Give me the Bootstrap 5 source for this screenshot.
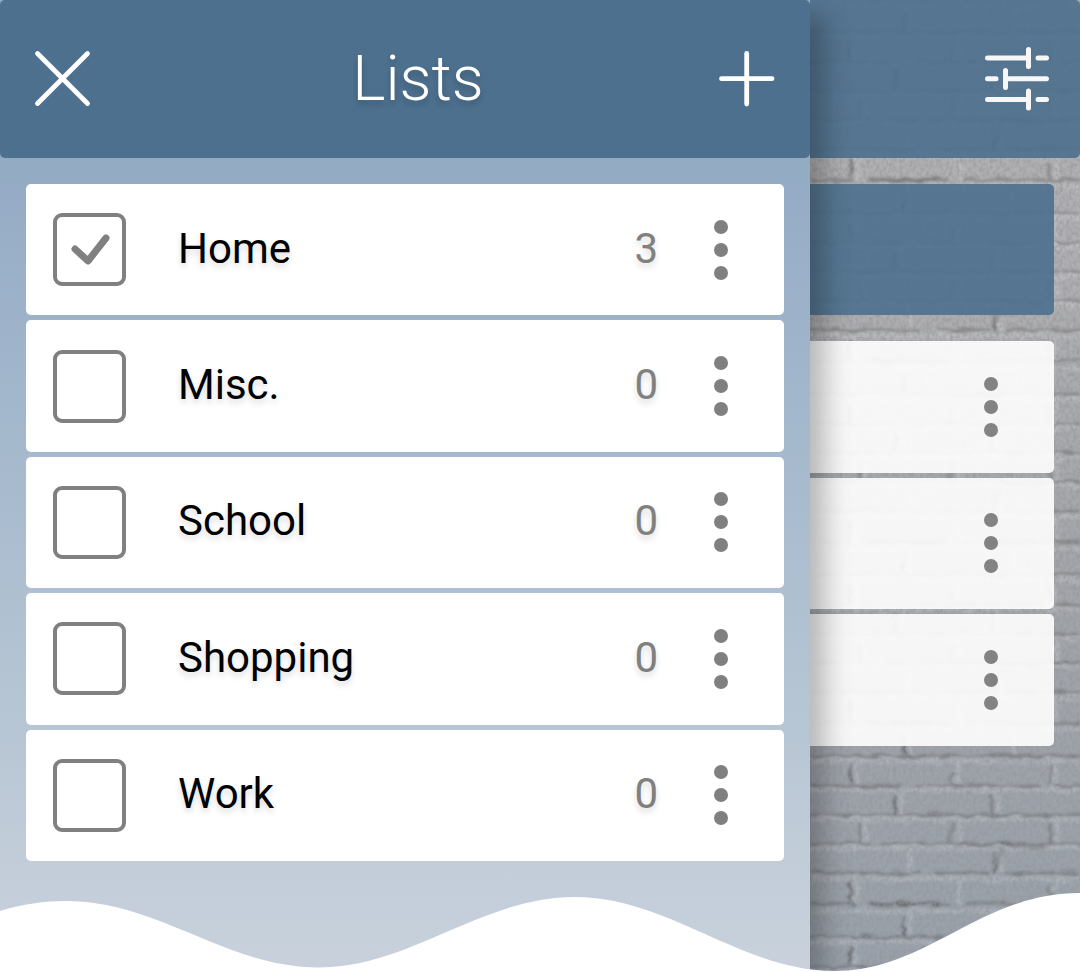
<!DOCTYPE html>
<html lang="en">
<head>
<meta charset="utf-8">
<meta name="viewport" content="width=device-width, initial-scale=1">
<title>Lists</title>
<link href="https://cdn.jsdelivr.net/npm/bootstrap@5.3.0/dist/css/bootstrap.min.css" rel="stylesheet">
<style>
  body { font-family: Roboto, "Liberation Sans", sans-serif; background: #fff; }
  .app-bar { height: 158px; background: #4d708e; border-radius: 5px; }
  .icon-btn { width: 126px; border: 0; background: none; padding: 0; color: #fff; }
  .bar-title { padding-left: 26px; font-size: 63px; font-weight: 300; line-height: 72px; color: #fff; text-shadow: 0 4px 6px rgba(0,0,0,.2); }

  .drawer { z-index: 2; background: linear-gradient(#92abc2 158px, #96acc6 190px, #a0b5cb 360px, #b7c6d4 730px, #c4cdda 880px, #c6d0db 940px, #cad0dc 972px); box-shadow: 15px 16px 24px rgba(0,0,0,.26); }
  .entries { display: grid; grid-auto-rows: 1fr; gap: 5px; }
  .drawer .entries { margin: 26px; min-height: 677px; }
  .entry { background: #fff; border-radius: 5px; }
  .entry .icon-btn { color: #808080; }
  .entry-name, .entry-count { padding-bottom: 2px; font-size: 42px; line-height: 48px; text-shadow: 0 4px 6px rgba(0,0,0,.15); }
  .entry-name { color: #000; padding-left: 52px; }
  .entry-count { color: #808080; }
  .form-check-input.tick { width: 73px; height: 73px; margin: 0 0 0 27px; border: 4px solid #808080; border-radius: 9px; background-color: #fff; background-origin: border-box; }
  .form-check-input.tick:checked { background-size: 73px 73px;
    background-image: url("data:image/svg+xml,%3Csvg xmlns='http://www.w3.org/2000/svg' viewBox='0 0 73 73'%3E%3Cpath d='M22 36L35 48L53 25' fill='none' stroke='%23808080' stroke-width='7' stroke-linecap='round' stroke-linejoin='round'/%3E%3C/svg%3E"); }

  .page { isolation: isolate; background: linear-gradient(#b2b2b2, #b0b0b2 250px, #a2a5aa 600px, #98a1ab); }
  .wall { z-index: -1; }
  .page .app-bar, .page .tool-strip, .page .entries { opacity: .91; }
  .page .app-bar { border-top-left-radius: 0; border-bottom-left-radius: 0; }
  .tool-strip { height: 131px; margin: 26px 26px 26px 0; background: #4d708e; border-radius: 0 5px 5px 0; }
  .page .entries { margin-right: 26px; min-height: 405px; }
  .page .entry { border-radius: 0 5px 5px 0; }

  .wave { z-index: 3; height: 80px; fill: #fff; }
</style>
</head>
<body>
<svg class="d-none">
  <symbol id="dots" viewBox="0 0 14 60"><circle cx="7" cy="7" r="7"/><circle cx="7" cy="30" r="7"/><circle cx="7" cy="53" r="7"/></symbol>
</svg>

<div class="d-flex position-relative min-vh-100 overflow-hidden">
  <aside class="drawer col-9 position-relative">
    <header class="app-bar d-flex align-items-stretch">
      <button class="icon-btn" type="button" aria-label="Close">
        <svg width="60" height="60" viewBox="0 0 60 60" fill="none" stroke="currentColor" stroke-width="4.800" stroke-linecap="round"><path d="M4.500 4.500L54.500 54.500M54.500 4.500L4.500 54.500"/></svg>
      </button>
      <h1 class="bar-title flex-grow-1 align-self-center text-center m-0">Lists</h1>
      <button class="icon-btn" type="button" aria-label="Add list">
        <svg width="60" height="60" viewBox="0 0 60 60" fill="none" stroke="currentColor" stroke-width="4.800" stroke-linecap="round"><path d="M4.500 29.700H55M29.700 4.500V55"/></svg>
      </button>
    </header>
    <div class="entries">
      <div class="entry d-flex align-items-center">
        <input class="form-check-input tick flex-shrink-0" type="checkbox" id="home" checked>
        <label class="entry-name flex-grow-1" for="home">Home</label><span class="entry-count">3</span>
        <button class="icon-btn align-self-stretch" type="button" aria-label="Home options"><svg width="14" height="60" fill="currentColor"><use href="#dots"/></svg></button>
      </div>
      <div class="entry d-flex align-items-center">
        <input class="form-check-input tick flex-shrink-0" type="checkbox" id="misc">
        <label class="entry-name flex-grow-1" for="misc">Misc.</label><span class="entry-count">0</span>
        <button class="icon-btn align-self-stretch" type="button" aria-label="Misc. options"><svg width="14" height="60" fill="currentColor"><use href="#dots"/></svg></button>
      </div>
      <div class="entry d-flex align-items-center">
        <input class="form-check-input tick flex-shrink-0" type="checkbox" id="school">
        <label class="entry-name flex-grow-1" for="school">School</label><span class="entry-count">0</span>
        <button class="icon-btn align-self-stretch" type="button" aria-label="School options"><svg width="14" height="60" fill="currentColor"><use href="#dots"/></svg></button>
      </div>
      <div class="entry d-flex align-items-center">
        <input class="form-check-input tick flex-shrink-0" type="checkbox" id="shopping">
        <label class="entry-name flex-grow-1" for="shopping">Shopping</label><span class="entry-count">0</span>
        <button class="icon-btn align-self-stretch" type="button" aria-label="Shopping options"><svg width="14" height="60" fill="currentColor"><use href="#dots"/></svg></button>
      </div>
      <div class="entry d-flex align-items-center">
        <input class="form-check-input tick flex-shrink-0" type="checkbox" id="work">
        <label class="entry-name flex-grow-1" for="work">Work</label><span class="entry-count">0</span>
        <button class="icon-btn align-self-stretch" type="button" aria-label="Work options"><svg width="14" height="60" fill="currentColor"><use href="#dots"/></svg></button>
      </div>
    </div>
  </aside>

  <main class="page col-3 position-relative">
    <!-- painted brick wall: six courses per tile, roughened joints and a fine grain -->
    <svg class="wall position-absolute top-0 start-0 w-100 h-100" aria-hidden="true">
      <defs>
        <filter id="rough" x="0" y="0" width="100%" height="100%">
          <feTurbulence type="fractalNoise" baseFrequency=".06 .14" numOctaves="4" seed="4"/>
          <feDisplacementMap in="SourceGraphic" scale="8" xChannelSelector="R" yChannelSelector="G"/>
          <feGaussianBlur stdDeviation=".9"/>
        </filter>
        <filter id="grain" x="0" y="0" width="100%" height="100%">
          <feTurbulence type="fractalNoise" baseFrequency=".3 .22" numOctaves="3" seed="9"/>
          <feColorMatrix values="0 0 0 0 .3  0 0 0 0 .3  0 0 0 0 .32  1.800 0 0 0 -.65"/>
        </filter>
        <pattern id="bricks" width="290" height="181" y="2" patternUnits="userSpaceOnUse">
          <g fill="none">
            <path stroke="#fff" stroke-width="5" stroke-opacity=".15" d="M0 4H290M0 35H290M0 64H290M0 93H290M0 122H290M0 153H290M100 3V28M204 3V28M46 34V58M148 34V58M245 34V58M92 64V87M188 64V87M55 93V116M150 93V116M247 93V116M100 122V146M190 122V146M47 152V178M149 152V178M246 152V178"/>
            <path stroke="#444" stroke-width="3" stroke-opacity=".34" d="M0 30H290M0 60H90M105 60H230M245 60H290M0 89H290M0 118H60M72 118H290M0 147H110M125 147H180M195 147H290M0 178H45M57 178H140M155 178H290M94 10V30M40 38V58M142 46V58M240 38V60M85 68V88M182 68V89M50 97V117M240 97V118M184 126V148M40 156V176M239 160V179"/>
            <path stroke="#333" stroke-width="5" stroke-opacity=".2" d="M94 18V28M40 42V56M85 70V86M144 97L139 117M192 123L183 145M40 158V174M60 178H130M190 118L235 122"/>
          </g>
        </pattern>
      </defs>
      <rect width="100%" height="100%" fill="url(#bricks)" filter="url(#rough)"/>
      <rect width="100%" height="100%" filter="url(#grain)" opacity=".8"/>
    </svg>
    <header class="app-bar d-flex justify-content-end">
      <button class="icon-btn" type="button" aria-label="Settings">
        <svg width="66" height="66" viewBox="0 0 66 66" fill="none" stroke="currentColor" stroke-width="5" stroke-linecap="round"><path d="M3.500 12H44M54 12H62.500M44.500 3.500V20.500M3.500 32.700H12M21.500 32.700H62.500M21.500 24.500V41.500M3.500 53.500H44M54 53.500H62.500M44.500 45V62"/></svg>
      </button>
    </header>
    <div class="tool-strip"></div>
    <div class="entries">
      <div class="entry d-flex justify-content-end"><button class="icon-btn" type="button" aria-label="First item options"><svg width="14" height="60" fill="currentColor"><use href="#dots"/></svg></button></div>
      <div class="entry d-flex justify-content-end"><button class="icon-btn" type="button" aria-label="Second item options"><svg width="14" height="60" fill="currentColor"><use href="#dots"/></svg></button></div>
      <div class="entry d-flex justify-content-end"><button class="icon-btn" type="button" aria-label="Third item options"><svg width="14" height="60" fill="currentColor"><use href="#dots"/></svg></button></div>
    </div>
  </main>

  <svg class="wave position-absolute bottom-0 start-0 w-100" viewBox="0 892 1080 80" preserveAspectRatio="none" aria-hidden="true">
    <path d="M0 911C22 904 45 901 67 901C158 901 227 967.500 318 967.500C411 967.500 481 897 575 897C669 897 741 971 835 971C928 971 980 893 1080 893V973H0Z"/>
  </svg>
</div>
<script src="https://cdn.jsdelivr.net/npm/bootstrap@5.3.0/dist/js/bootstrap.bundle.min.js"></script>
</body>
</html>
